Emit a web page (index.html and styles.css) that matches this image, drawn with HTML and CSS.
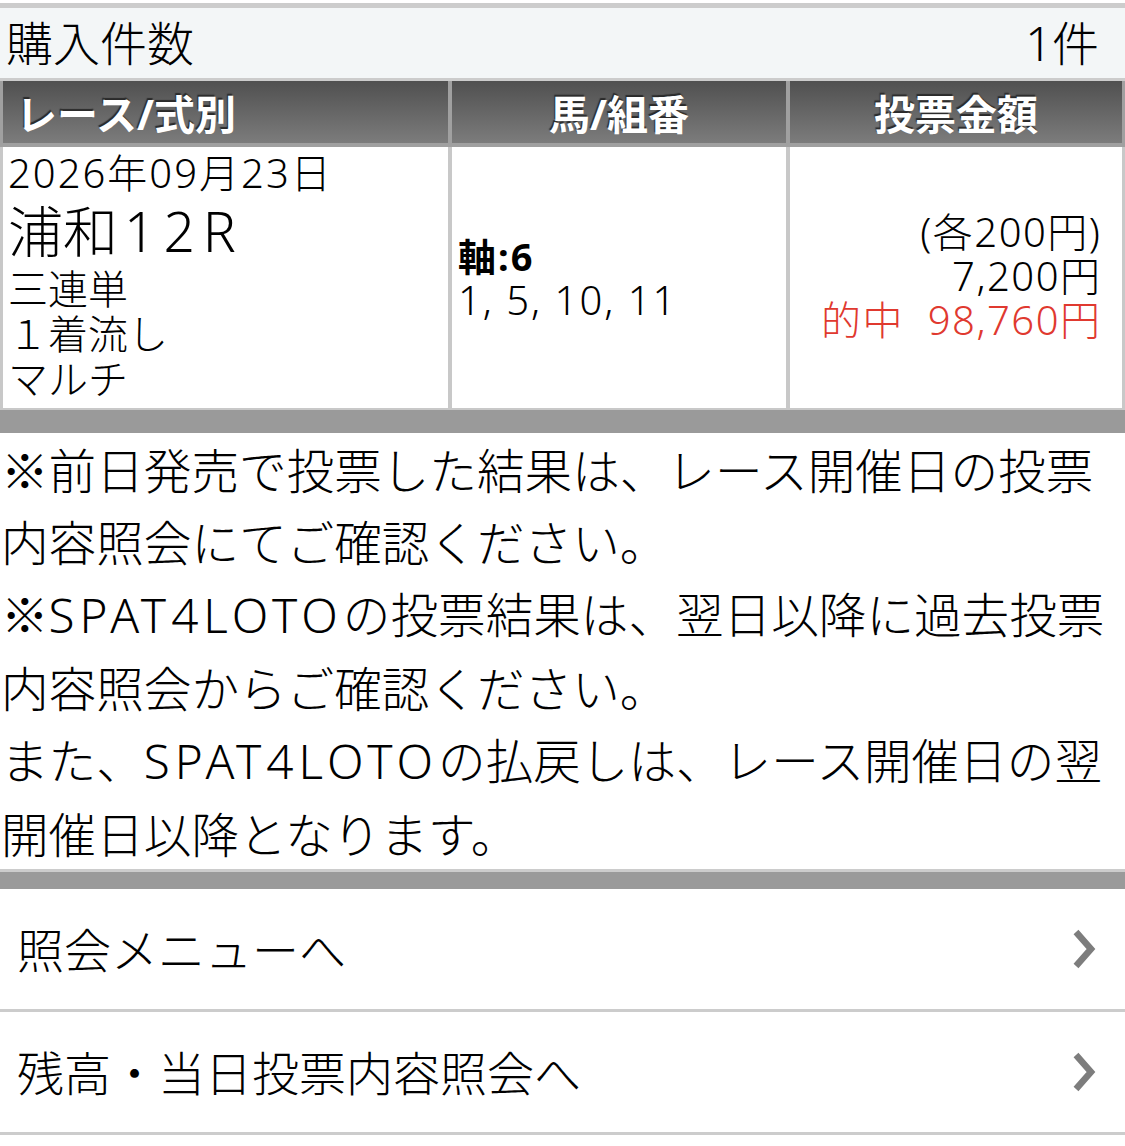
FILE: index.html
```html
<!DOCTYPE html>
<html lang="ja">
<head>
<meta charset="utf-8">
<link rel="stylesheet" href="styles.css">
</head>
<body>
<div class="page">
  <div class="summary">
    <span class="summary-label">購入件数</span>
    <span class="summary-value">1件</span>
  </div>
  <div class="thead">
    <div class="th th-left">レース/式別</div>
    <div class="th">馬/組番</div>
    <div class="th">投票金額</div>
  </div>
  <div class="tbody">
    <div class="td td-race">
      <div class="race-date">2026年09月23日</div>
      <div class="race-name">浦和<span class="race-no">12R</span></div>
      <div class="race-line">三連単</div>
      <div class="race-line">１着流し</div>
      <div class="race-line">マルチ</div>
    </div>
    <div class="td td-horse">
      <div class="horse-axis">軸:6</div>
      <div class="horse-list">1, 5, 10, 11</div>
    </div>
    <div class="td td-amount">
      <div class="amount-line">(各200円)</div>
      <div class="amount-line">7,200円</div>
      <div class="amount-line hit">的中&nbsp;&nbsp;98,760円</div>
    </div>
  </div>
  <div class="bar"></div>
  <div class="notes">
    <p>※前日発売で投票した結果は、レース開催日の投票<br>内容照会にてご確認ください。</p>
    <p>※<span class="latin">SPAT4LOTO</span>の投票結果は、翌日以降に過去投票<br>内容照会からご確認ください。</p>
    <p>また、<span class="latin">SPAT4LOTO</span>の払戻しは、レース開催日の翌<br>開催日以降となります。</p>
  </div>
  <div class="bar bar-bottom"></div>
  <ul class="menu">
    <li class="menu-item">
      <span class="menu-label">照会メニューへ</span>
      <svg class="chevron" viewBox="0 0 24 40" width="24" height="40"><path d="M3 3 L18 20 L3 37" fill="none" stroke="#7d7d7d" stroke-width="6.5"/></svg>
    </li>
    <li class="menu-item">
      <span class="menu-label">残高・当日投票内容照会へ</span>
      <svg class="chevron" viewBox="0 0 24 40" width="24" height="40"><path d="M3 3 L18 20 L3 37" fill="none" stroke="#7d7d7d" stroke-width="6.5"/></svg>
    </li>
  </ul>
</div>
</body>
</html>
```

FILE: styles.css
```css
* {
  box-sizing: border-box;
}

html, body {
  margin: 0;
  padding: 0;
  background: #ffffff;
}

body {
  font-family: "Noto Sans", "Noto Sans CJK JP", sans-serif;
  font-weight: 300;
  color: #000000;
}

.page {
  width: 1125px;
  padding-top: 3px;
}

.summary {
  display: flex;
  justify-content: space-between;
  align-items: center;
  height: 78px;
  background: #f3f6f7;
  border-top: 5px solid #cccccc;
  border-bottom: 3px solid #cccccc;
  padding: 0 26px 0 6px;
  font-size: 47px;
  line-height: 1;
}

.thead {
  display: grid;
  grid-template-columns: 445px 334px 332px;
  column-gap: 4px;
  background: #a0a0a0;
  padding: 0 3px 4px 3px;
}

.th {
  height: 62px;
  background: linear-gradient(#505050, #7c7c7c);
  color: #ffffff;
  font-weight: bold;
  font-size: 41px;
  display: flex;
  align-items: center;
  justify-content: center;
  text-shadow: -1px -2px 1px #2a2a2a;
}

.th-left {
  justify-content: flex-start;
  padding-left: 13px;
}

.tbody {
  display: grid;
  grid-template-columns: 445px 334px 332px;
  column-gap: 4px;
  background: #c8c8c8;
  padding: 0 3px 2px 3px;
}

.td {
  height: 261px;
  background: #ffffff;
}

.td-race {
  padding: 3px 0 0 5px;
}

.race-date {
  font-size: 40px;
  line-height: 46px;
  letter-spacing: 2px;
}

.race-name {
  font-size: 55px;
  line-height: 70px;
}

.race-no {
  letter-spacing: 8px;
  margin-left: 6px;
}

.race-line {
  font-size: 40px;
  line-height: 45px;
}

.td-horse {
  display: flex;
  flex-direction: column;
  justify-content: center;
  padding-left: 6px;
}

.horse-axis {
  font-size: 38px;
  line-height: 43px;
  font-weight: bold;
  letter-spacing: 2px;
}

.horse-list {
  font-size: 40px;
  line-height: 43px;
  letter-spacing: 2px;
}

.td-amount {
  display: flex;
  flex-direction: column;
  justify-content: center;
  align-items: flex-end;
  padding: 0 22px 4px 0;
}

.amount-line {
  font-size: 40px;
  line-height: 44px;
  letter-spacing: 1.5px;
  margin-right: -1.5px;
}

.hit {
  color: #e0392f;
}

.bar {
  height: 23px;
  background: #9a9a9a;
}

.bar-bottom {
  height: 20px;
  border-top: 3px solid #cccccc;
}

.notes {
  padding-left: 1px;
  font-size: 47.6px;
  line-height: 72px;
  font-family: "Noto Sans CJK JP", sans-serif;
}

.notes p {
  margin: 0;
  white-space: nowrap;
}

.latin {
  font-family: "Noto Sans", sans-serif;
  letter-spacing: 5px;
}

.menu {
  list-style: none;
  margin: 0;
  padding: 0;
}

.menu-item {
  display: flex;
  justify-content: space-between;
  align-items: center;
  height: 123px;
  border-bottom: 3px solid #cccccc;
  padding: 2px 28px 0 17px;
  font-size: 47px;
}

.menu-label {
  line-height: 1;
}

.chevron {
  display: block;
  margin-top: -2px;
}
```
